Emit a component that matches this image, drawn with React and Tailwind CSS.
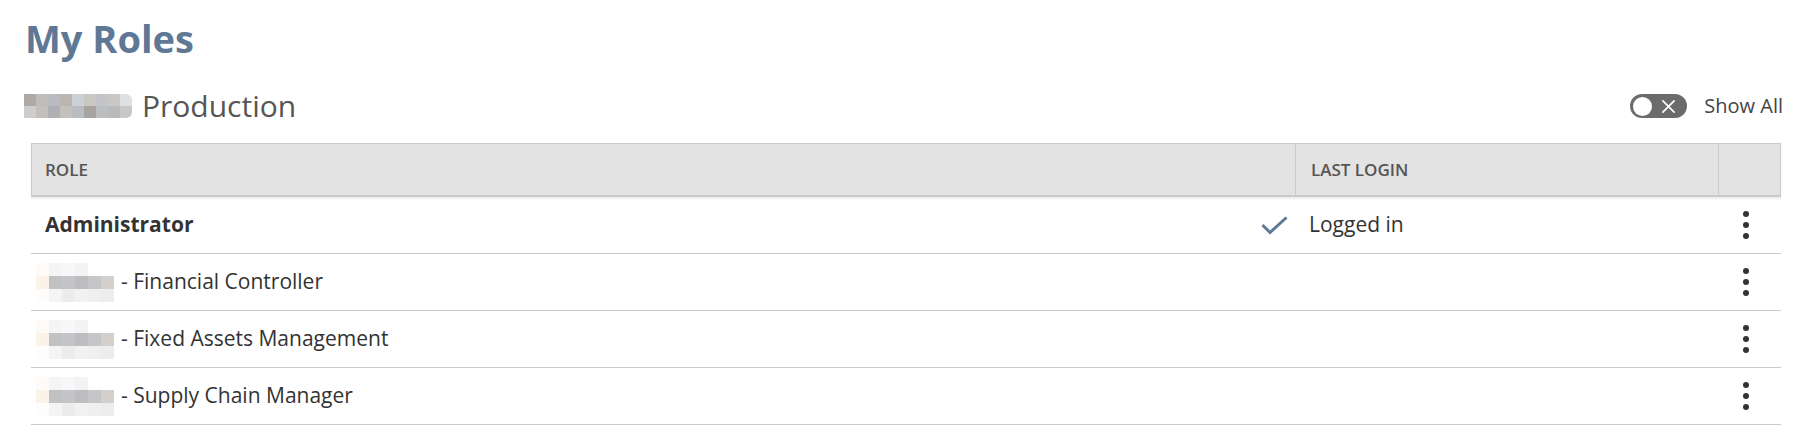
const font = { fontFamily: '"Open Sans", "Liberation Sans", sans-serif' };

// pixelated (blurred-out) name in front of the environment title
const envPixels = [
  ['#aeaaa7', '#bfbcba', '#b8bbbf', '#bcb6b2', '#cbd0d6', '#cac7c3', '#c3c5c9', '#c9c8c6', '#dfe0e2'],
  ['#cdcdcb', '#c2bfbd', '#aeb0b4', '#c4c1bd', '#b9bcc0', '#a7a3a0', '#bcbec0', '#b9bbbb', '#c6c7c8'],
];

// pixelated prefix in front of role names
const rolePixels = [
  ['#fdfaf8', '#f5f5f5', '#f6f7f8', '#f3f3f3', '#fefefe', '#ffffff'],
  ['#fbf2ea', '#c0c2c4', '#c4c5c8', '#bdbdbf', '#c5c6c7', '#d2cfcd'],
  ['#fefdfc', '#f3f4f5', '#ececec', '#f1f1f1', '#efefee', '#ededed'],
];

const roles = [
  { name: 'Administrator', current: true, lastLogin: 'Logged in' },
  { name: 'Financial Controller' },
  { name: 'Fixed Assets Management' },
  { name: 'Supply Chain Manager' },
];

const Pixels = ({ grid, size, className = '' }) => (
  <div className={`flex flex-col ${className}`}>
    {grid.map((row, i) => (
      <div key={i} className="flex">
        {row.map((c, j) => (
          <div key={j} style={{ backgroundColor: c, width: size, height: size }} />
        ))}
      </div>
    ))}
  </div>
);

const Toggle = () => (
  <div className="flex items-center w-[57px] h-[24px] rounded-full bg-[#6b6b6b] px-[3px]">
    <div className="w-[19px] h-[19px] rounded-full bg-white" />
    <svg className="ml-[9px] w-[15px] h-[15px]" viewBox="0 0 16 16" fill="none" stroke="white" strokeWidth="1.8" strokeLinecap="round">
      <path d="M2 2l12 12M14 2L2 14" />
    </svg>
  </div>
);

const Kebab = () => (
  <svg className="w-[8px] h-[30px]" viewBox="0 0 8 30" fill="#333">
    <circle cx="4" cy="4" r="3" />
    <circle cx="4" cy="15" r="3" />
    <circle cx="4" cy="26" r="3" />
  </svg>
);

export default function App() {
  return (
    <div className="bg-white min-h-[447px] w-[1799px] text-[#333]" style={font}>
      <h1 className="pl-[25px] pt-[16px] text-[38px] leading-[44px] font-bold text-[#5e7896]">My Roles</h1>

      <div className="flex items-center justify-between mt-[26px] pl-[24px] pr-[16px] h-[40px]">
        <div className="flex items-center">
          <Pixels grid={envPixels} size="12px" className="rounded-r-[6px] overflow-hidden" />
          <span className="ml-[10px] text-[30px] leading-[40px] text-[#555]">Production</span>
        </div>
        <div className="flex items-center">
          <Toggle />
          <span className="ml-[17px] text-[20px] text-[#444]">Show All</span>
        </div>
      </div>

      <div className="ml-[31px] mt-[17px] w-[1750px]">
        {/* header */}
        <div className="grid grid-cols-[1263px_423px_1fr] h-[54px] bg-[#e3e3e3] border border-[#cacaca] border-b-2 shadow-[0_2px_2px_rgba(0,0,0,0.08)]">
          <div className="flex items-center pl-[13px] text-[17px] font-semibold text-[#555]">ROLE</div>
          <div className="flex items-center pl-[15px] border-l border-[#cacaca] text-[17px] font-semibold text-[#555]">LAST LOGIN</div>
          <div className="border-l border-[#cacaca]" />
        </div>

        {/* rows */}
        {roles.map((r) => (
          <div key={r.name} className="grid grid-cols-[1263px_423px_1fr] h-[57px] border-b border-[#cacaca] text-[21px]">
            <div className="flex items-center justify-between pl-[14px] pr-[6px]">
              {r.current ? (
                <span className="font-bold">{r.name}</span>
              ) : (
                <span className="flex items-center">
                  <Pixels grid={rolePixels} size="13px" className="-ml-[9px]" />
                  <span className="ml-[7px]">- {r.name}</span>
                </span>
              )}
              {r.current && (
                <svg className="w-[27px] h-[19px]" viewBox="0 0 27 19" fill="none" stroke="#5e7896" strokeWidth="3">
                  <path d="M1.5 9l7.5 7.5L25.5 1.5" />
                </svg>
              )}
            </div>
            <div className="flex items-center pl-[15px]">{r.lastLogin}</div>
            <div className="flex items-center pl-[25px]">
              <Kebab />
            </div>
          </div>
        ))}
      </div>
    </div>
  );
}
